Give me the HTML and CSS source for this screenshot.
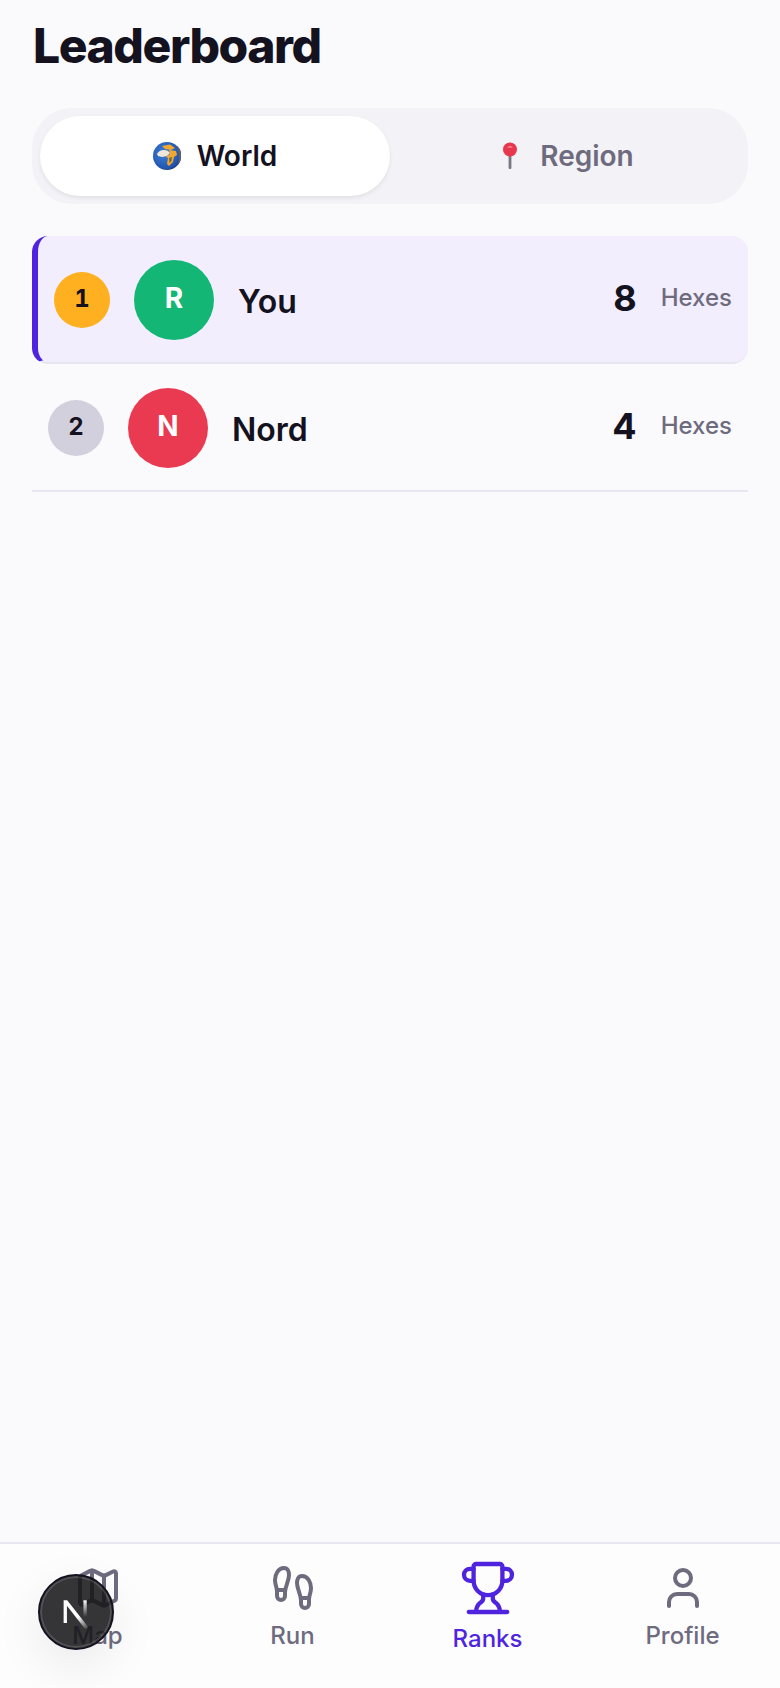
FILE: index.html
```html
<!DOCTYPE html>
<html lang="en">
<head>
<meta charset="utf-8">
<title>Leaderboard</title>
<link rel="stylesheet" href="styles.css">
</head>
<body>
<div class="app">
  <main class="content">
    <h1 class="title">Leaderboard</h1>

    <div class="scope-toggle">
      <button class="scope scope-active" type="button">
        <svg class="scope-icon" viewBox="0 0 28 28" aria-hidden="true">
          <defs>
            <radialGradient id="ocean" cx="40%" cy="40%" r="70%">
              <stop offset="0" stop-color="#3b82d8"/>
              <stop offset="0.75" stop-color="#2457b0"/>
              <stop offset="1" stop-color="#1f3570"/>
            </radialGradient>
          </defs>
          <circle cx="14" cy="14" r="14" fill="url(#ocean)"/>
          <!-- Europe, Africa and Arabia -->
          <path d="M9 4 L17 2.5 L22 6 L18 8 L12 7 Z" fill="#f2a72e"/>
          <path d="M16 8 L23 9 L24 13 L21 15 L20 20 L16 24 L14 22 L15 16 L13 15 L17 12 Z" fill="#f2a72e"/>
          <path d="M4 12 C6 8 11 7 15 9 L17 11 L14 14 L9 15 L5 14 Z" fill="#f1e7d6"/>
          <path d="M16 16 L19 15 L18.5 19 L16.5 21 Z" fill="#6b6a4e"/>
          <path d="M24 3.5 A14 14 0 0 1 25 23 L26 14 Z" fill="#5b5f6e"/>
        </svg>
        <span>World</span>
      </button>
      <button class="scope" type="button">
        <svg class="scope-icon" viewBox="0 0 28 28" aria-hidden="true">
          <rect x="12.6" y="13" width="2.8" height="14" rx="1" fill="#77777f"/>
          <circle cx="14" cy="7.5" r="7" fill="#e8384f"/>
          <path d="M11 5.5 Q14 2.5 17 5.5 Z" fill="#f59aa5"/>
        </svg>
        <span>Region</span>
      </button>
    </div>

    <ol class="ranking">
      <li class="entry entry-self">
        <span class="rank rank-gold">1</span>
        <span class="avatar avatar-green">R</span>
        <span class="name">You</span>
        <span class="score">8</span>
        <span class="unit">Hexes</span>
      </li>
      <li class="entry">
        <span class="rank rank-silver">2</span>
        <span class="avatar avatar-red">N</span>
        <span class="name">Nord</span>
        <span class="score">4</span>
        <span class="unit">Hexes</span>
      </li>
    </ol>
  </main>

  <nav class="tabbar">
    <a class="tab">
      <svg class="tab-icon" viewBox="0 0 24 24">
        <path d="M14.106 5.553a2 2 0 0 0 1.788 0l3.659-1.83A1 1 0 0 1 21 4.619v12.764a1 1 0 0 1-.553.894l-4.553 2.277a2 2 0 0 1-1.788 0l-4.212-2.106a2 2 0 0 0-1.788 0l-3.659 1.83A1 1 0 0 1 3 19.381V6.618a1 1 0 0 1 .553-.894l4.553-2.277a2 2 0 0 1 1.788 0z"/>
        <path d="M15 5.764v15"/>
        <path d="M9 3.236v15"/>
      </svg>
      <span class="tab-label">Map</span>
    </a>
    <a class="tab">
      <svg class="tab-icon" viewBox="0 0 24 24">
        <path d="M4 16v-2.38C4 11.5 2.97 10.5 3 8c.03-2.72 1.49-6 4.5-6C9.37 2 10 3.8 10 5.5c0 3.11-2 5.66-2 8.68V16a2 2 0 1 1-4 0z"/>
        <path d="M20 20v-2.38c0-2.12 1.03-3.12 1-5.62-.03-2.72-1.49-6-4.5-6C14.63 6 14 7.8 14 9.5c0 3.11 2 5.66 2 8.68V20a2 2 0 1 0 4 0z"/>
        <path d="M16 17h4"/>
        <path d="M4 13h4"/>
      </svg>
      <span class="tab-label">Run</span>
    </a>
    <a class="tab tab-active">
      <svg class="tab-icon" viewBox="0 0 24 24">
        <path d="M10 14.66v1.626a2 2 0 0 1-.976 1.696A5 5 0 0 0 7 21.978"/>
        <path d="M14 14.66v1.626a2 2 0 0 0 .976 1.696A5 5 0 0 1 17 21.978"/>
        <path d="M18 9h1.5a1 1 0 0 0 0-5H18"/>
        <path d="M4 22h16"/>
        <path d="M6 9a6 6 0 0 0 12 0V3a1 1 0 0 0-1-1H7a1 1 0 0 0-1 1z"/>
        <path d="M6 9H4.5a1 1 0 0 1 0-5H6"/>
      </svg>
      <span class="tab-label">Ranks</span>
    </a>
    <a class="tab">
      <svg class="tab-icon" viewBox="0 0 24 24">
        <path d="M19 21v-2a4 4 0 0 0-4-4H9a4 4 0 0 0-4 4v2"/>
        <circle cx="12" cy="7" r="4"/>
      </svg>
      <span class="tab-label">Profile</span>
    </a>
  </nav>

  <!-- framework dev-mode badge, floats above the tab bar -->
  <div class="dev-badge">
    <svg class="dev-logo" viewBox="0 0 32 32" aria-hidden="true">
      <defs>
        <linearGradient id="slash" x1="0.2" y1="0" x2="1" y2="1">
          <stop offset="0.55" stop-color="#fff"/>
          <stop offset="1" stop-color="#fff" stop-opacity="0"/>
        </linearGradient>
        <linearGradient id="post" x1="0" y1="0" x2="0" y2="1">
          <stop offset="0" stop-color="#fff"/>
          <stop offset="1" stop-color="#fff" stop-opacity="0"/>
        </linearGradient>
      </defs>
      <path d="M7 7.5h2.6L25 27l-2.2 1.5L9.4 11.5V24H7z" fill="url(#slash)"/>
      <rect x="21.4" y="7.5" width="2.4" height="12" fill="url(#post)"/>
    </svg>
  </div>
</div>
</body>
</html>
```

FILE: styles.css
```css
* {
  box-sizing: border-box;
}

html,
body {
  margin: 0;
  height: 100%;
}

body {
  background: #fafafd;
  color: #14121f;
  font-family: "Inter", "Liberation Sans", sans-serif;
}

.app {
  position: relative;
  display: flex;
  flex-direction: column;
  height: 100vh;
  overflow: hidden;
}

.content {
  flex: 1;
  padding: 16px 32px 0;
}

.title {
  margin: 0 0 32px 1px;
  font-size: 48px;
  line-height: 60px;
  font-weight: 800;
  letter-spacing: -1.44px;
}

/* World / Region switch */
.scope-toggle {
  display: grid;
  grid-template-columns: 1fr 1fr;
  padding: 8px;
  border-radius: 40px;
  background: #f3f2f7;
}

.scope {
  display: flex;
  align-items: center;
  justify-content: center;
  gap: 16px;
  height: 80px;
  border: 0;
  border-radius: 40px;
  background: transparent;
  color: #6e6b7e;
  font: 600 28px "Inter", sans-serif;
}

.scope-active {
  background: #fff;
  color: #14121f;
  box-shadow: 0 2px 4px rgba(20, 18, 31, 0.08);
}

.scope-icon {
  width: 28px;
  height: 28px;
}

/* Ranking list */
.ranking {
  list-style: none;
  margin: 32px 0 0;
  padding: 0;
}

.entry {
  display: flex;
  align-items: center;
  gap: 24px;
  height: 128px;
  padding: 2px 16px 0;
  border-bottom: 2px solid #e8e6f0;
}

.entry-self {
  border-left: 6px solid #4f24de;
  border-radius: 16px;
  background: #f2eefd;
}

.rank,
.avatar {
  display: flex;
  align-items: center;
  justify-content: center;
  flex: none;
  border-radius: 50%;
  font-weight: 700;
}

.rank {
  width: 56px;
  height: 56px;
  padding-bottom: 4px;
  font-size: 24px;
  font-variant-numeric: tabular-nums;
}

.rank-gold {
  background: #ffb020;
}

.rank-silver {
  background: #d1d0dc;
}

.avatar {
  width: 80px;
  height: 80px;
  padding-bottom: 4px;
  color: #fff;
  font-size: 28px;
}

.avatar-green {
  background: #13b674;
}

.avatar-red {
  background: #e93a52;
}

.name {
  flex: 1;
  font-size: 32px;
  font-weight: 600;
  padding-top: 2px;
}

.score {
  font-size: 36px;
  font-weight: 700;
  padding-bottom: 4px;
}

.unit {
  color: #6e6b7e;
  font-size: 24px;
  font-weight: 500;
  padding-bottom: 6px;
}

/* Bottom navigation */
.tabbar {
  display: grid;
  grid-template-columns: repeat(4, 1fr);
  height: 146px;
  padding-top: 20px;
  border-top: 2px solid #e8e6f0;
  background: #fdfdfe;
}

.tab {
  display: flex;
  flex-direction: column;
  align-items: center;
  gap: 8px;
  color: #6e6b7e;
}

.tab-icon {
  width: 48px;
  height: 48px;
  fill: none;
  stroke: currentColor;
  stroke-width: 2;
  stroke-linecap: round;
  stroke-linejoin: round;
}

.tab-label {
  font-size: 24px;
  line-height: 32px;
  font-weight: 500;
}

.tab-active {
  color: #4f24de;
}

.tab-active .tab-icon {
  stroke-width: 1.8;
  transform: scale(1.2);
}

.tab-active .tab-label {
  padding-top: 3px;
}

.dev-badge {
  position: absolute;
  left: 38px;
  bottom: 38px;
  display: flex;
  align-items: center;
  justify-content: center;
  width: 76px;
  height: 76px;
  border: 2px solid #14121f;
  border-radius: 50%;
  background: rgba(20, 20, 22, 0.86);
  box-shadow: inset 0 0 0 2px rgba(255, 255, 255, 0.14), 0 16px 48px rgba(0, 0, 0, 0.08);
}

.dev-logo {
  width: 44px;
  height: 44px;
}
```
